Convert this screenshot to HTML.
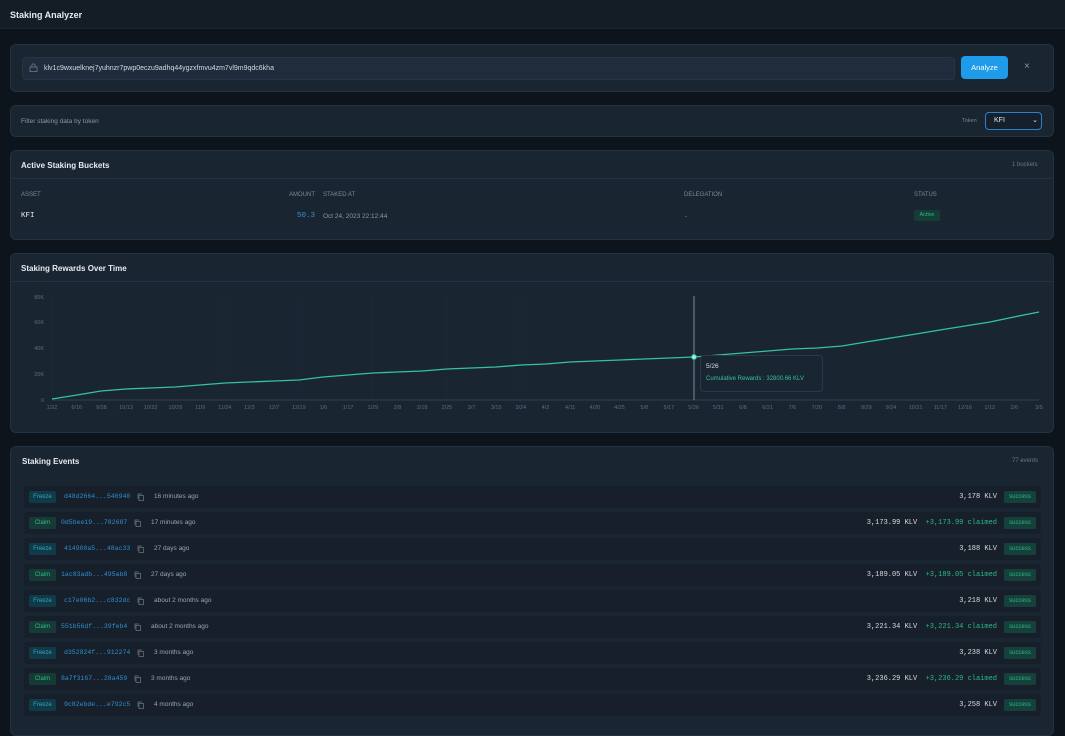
<!DOCTYPE html>
<html><head><meta charset="utf-8"><style>
*{box-sizing:border-box;margin:0;padding:0}
body{width:1065px;height:720px;overflow:hidden;background:#0e141b;font-family:"Liberation Sans",sans-serif;color:#e3e8ee;position:relative}
.a{position:absolute}
.card{position:absolute;left:10px;width:1044px;background:#1a2532;border:1px solid #233140;border-radius:6px}
.t{font-size:8px;font-weight:bold;color:#e6ebf0}
.mono{font-family:"Liberation Mono",monospace}
.row{position:absolute;left:24px;width:1017px;height:22px;background:#161f2a;border-radius:3px}
.tag{position:absolute;left:5px;top:5px;height:12px;width:27px;font-size:6px;line-height:12px;text-align:center;border-radius:2px}
.fz{background:#113a48;color:#2ea7c4}
.cl{background:#163b36;color:#33b98b}
.hash{position:absolute;top:7px;font-size:6.5px;color:#2f8fd0}
.cp{position:absolute;top:7px;width:7px;height:8px}
.ago{position:absolute;top:7px;font-size:6.5px;color:#9aa5b1}
.amt{position:absolute;right:44px;top:7px;font-size:7px;color:#d8dde3;text-align:right;white-space:pre}
.ok{position:absolute;right:5px;top:5px;width:32px;height:12px;background:#15413a;color:#2cb988;font-size:6px;line-height:12px;text-align:center;border-radius:2px}
.cg{color:#2cb988}
</style></head><body>
<div class="a" style="left:0;top:0;width:1065px;height:29px;background:#141c25;border-bottom:1px solid #1b2530"></div>
<div class="a t" style="left:10px;top:10px;font-size:9px">Staking Analyzer</div>

<div class="card" style="top:44px;height:48px"></div>
<div class="a" style="left:22px;top:57px;width:933px;height:23px;background:#1e2c3b;border:1px solid #263546;border-radius:4px"></div>
<svg class="a" style="left:29px;top:63px" width="9" height="9" viewBox="0 0 9 9"><rect x="1" y="4" width="7" height="4.5" fill="none" stroke="#6e7a88" stroke-width=".8"/><path d="M2.8 4V2.6a1.7 1.7 0 0 1 3.4 0V4" fill="none" stroke="#6e7a88" stroke-width=".8"/></svg>
<div class="a" style="left:44px;top:65px;font-size:7px;color:#d5dbe2">klv1c9wxuelknej7yuhnzr7pwp0eczu9adhq44ygzxfmvu4zm7vl9m9qdc6kha</div>
<div class="a" style="left:961px;top:56px;width:47px;height:23px;background:#1e9be9;border-radius:4px;color:#fff;font-size:7.5px;line-height:23px;text-align:center">Analyze</div>
<div class="a" style="left:1024px;top:61px;font-size:10px;line-height:12px;color:#8a96a3">×</div>

<div class="card" style="top:105px;height:32px"></div>
<div class="a" style="left:21px;top:118px;font-size:6.5px;color:#8a96a3">Filter staking data by token</div>
<div class="a" style="left:962px;top:118px;font-size:5.5px;color:#7a8693">Token</div>
<div class="a" style="left:985px;top:112px;width:57px;height:18px;border:1px solid #2f7fd0;border-radius:4px;background:#15202c;font-size:7px;line-height:16px;padding-left:8px;color:#e3e8ee">KFI<span style="position:absolute;right:3px;top:0;font-size:7px">⌄</span></div>

<div class="card" style="top:150px;height:90px"></div>
<div class="a t" style="left:21px;top:161px">Active Staking Buckets</div>
<div class="a" style="left:1012px;top:162px;font-size:6px;color:#6c7885">1 buckets</div>
<div class="a" style="left:11px;top:178px;width:1042px;height:1px;background:#223040"></div>
<div class="a" style="left:21px;top:192px;font-size:6px;color:#7d8895">ASSET</div>
<div class="a" style="left:289px;top:192px;font-size:6px;color:#7d8895">AMOUNT</div>
<div class="a" style="left:323px;top:192px;font-size:6px;color:#7d8895">STAKED AT</div>
<div class="a" style="left:684px;top:192px;font-size:6px;color:#7d8895">DELEGATION</div>
<div class="a" style="left:914px;top:192px;font-size:6px;color:#7d8895">STATUS</div>
<div class="a mono" style="left:21px;top:212px;font-size:7.5px;color:#e6ebf0">KFI</div>
<div class="a mono" style="left:297px;top:212px;font-size:7.5px;color:#2f95d8">50.3</div>
<div class="a" style="left:323px;top:213px;font-size:6.5px;color:#8c97a3">Oct 24, 2023 22:12:44</div>
<div class="a" style="left:685px;top:213px;font-size:6.5px;color:#8c97a3">-</div>
<div class="a" style="left:914px;top:210px;width:26px;height:11px;background:#143d36;color:#2cb988;font-size:5.5px;line-height:11px;text-align:center;border-radius:2px">Active</div>

<div class="card" style="top:253px;height:180px"></div>
<div class="a t" style="left:21px;top:264px">Staking Rewards Over Time</div>
<div class="a" style="left:11px;top:281px;width:1042px;height:1px;background:#223040"></div>
<svg class="a" style="left:0;top:0" width="1065" height="440" font-family="Liberation Sans" font-size="5.5" fill="#5f6b78">
<g stroke="#243242" stroke-width=".6" stroke-dasharray="2 2">
<line x1="52" y1="297" x2="52" y2="400"/><line x1="299" y1="297" x2="299" y2="400"/><line x1="372" y1="297" x2="372" y2="400"/><line x1="520" y1="297" x2="520" y2="400"/><line x1="224" y1="297" x2="224" y2="400"/><line x1="446" y1="297" x2="446" y2="400"/></g>
<line x1="52" y1="400" x2="1039" y2="400" stroke="#3a4756" stroke-width=".8"/>
<text x="44" y="299" text-anchor="end">80K</text><text x="44" y="324" text-anchor="end">60K</text><text x="44" y="350" text-anchor="end">40K</text><text x="44" y="376" text-anchor="end">20K</text><text x="44" y="402" text-anchor="end">0</text>
<g text-anchor="middle">
<text x="52.0" y="409">12/2</text><text x="76.7" y="409">6/16</text><text x="101.4" y="409">9/28</text><text x="126.0" y="409">10/13</text><text x="150.7" y="409">10/22</text><text x="175.4" y="409">10/29</text><text x="200.1" y="409">11/9</text><text x="224.7" y="409">11/24</text><text x="249.4" y="409">12/3</text><text x="274.1" y="409">12/7</text><text x="298.8" y="409">12/19</text><text x="323.4" y="409">1/6</text><text x="348.1" y="409">1/17</text><text x="372.8" y="409">1/29</text><text x="397.5" y="409">2/8</text><text x="422.1" y="409">2/18</text><text x="446.8" y="409">2/25</text><text x="471.5" y="409">3/7</text><text x="496.2" y="409">3/15</text><text x="520.8" y="409">3/24</text><text x="545.5" y="409">4/2</text><text x="570.2" y="409">4/11</text><text x="594.9" y="409">4/20</text><text x="619.5" y="409">4/25</text><text x="644.2" y="409">5/8</text><text x="668.9" y="409">5/17</text><text x="693.6" y="409">5/26</text><text x="718.2" y="409">5/31</text><text x="742.9" y="409">6/8</text><text x="767.6" y="409">6/21</text><text x="792.3" y="409">7/6</text><text x="816.9" y="409">7/20</text><text x="841.6" y="409">8/8</text><text x="866.3" y="409">8/29</text><text x="891.0" y="409">9/24</text><text x="915.6" y="409">10/21</text><text x="940.3" y="409">11/17</text><text x="965.0" y="409">12/16</text><text x="989.7" y="409">1/12</text><text x="1014.3" y="409">2/6</text><text x="1039.0" y="409">3/5</text></g>
<line x1="694" y1="296" x2="694" y2="400" stroke="#7f8a96" stroke-width="1"/>
<polyline fill="none" stroke="#34c39a" stroke-width="1.3" points="52,399 77,395 101,391 126,389 150,388 175,387 200,385 225,383 249,382 274,381 299,380 323,377 348,375 373,373 397,372 422,371 447,369 471,368 496,367 521,365 546,364 570,362 595,361 620,360 644,359 669,358 694,357 718,355 743,353 768,351 792,349 817,348 842,346 866,342 891,338 916,334 940,330 965,326 990,322 1014,317 1039,312"/>
<circle cx="694" cy="357" r="2.4" fill="#9ff0d8" stroke="#34c39a" stroke-width="1"/>
</svg>
<div class="a" style="left:700px;top:355px;width:123px;height:37px;background:#1a2532;border:1px solid #2a3847;border-radius:4px"></div>
<div class="a" style="left:706px;top:363px;font-size:6.5px;color:#d8dde3">5/26</div>
<div class="a" style="left:706px;top:376px;font-size:6px;color:#34c39a">Cumulative Rewards : 32800.66 KLV</div>

<div class="card" style="top:446px;height:290px"></div>
<div class="a t" style="left:22px;top:457px">Staking Events</div>
<div class="a" style="left:1012px;top:458px;font-size:6px;color:#6c7885">77 events</div>

<div class="row" style="top:486px"><div class="tag fz">Freeze</div><div class="hash mono" style="left:40px">d48d2664...546940</div><svg class="cp" style="left:113px" viewBox="0 0 7 8"><rect x="2" y="2.5" width="4.5" height="5" fill="none" stroke="#6e7a88" stroke-width=".7"/><path d="M1 6V1h4" fill="none" stroke="#6e7a88" stroke-width=".7"/></svg><div class="ago" style="left:130px">16 minutes ago</div><div class="amt mono">3,178 KLV</div><div class="ok">success</div></div>
<div class="row" style="top:512px"><div class="tag cl">Claim</div><div class="hash mono" style="left:37px">0d5bee19...782687</div><svg class="cp" style="left:110px" viewBox="0 0 7 8"><rect x="2" y="2.5" width="4.5" height="5" fill="none" stroke="#6e7a88" stroke-width=".7"/><path d="M1 6V1h4" fill="none" stroke="#6e7a88" stroke-width=".7"/></svg><div class="ago" style="left:127px">17 minutes ago</div><div class="amt mono">3,173.99 KLV  <span class="cg">+3,173.99 claimed</span></div><div class="ok">success</div></div>
<div class="row" style="top:538px"><div class="tag fz">Freeze</div><div class="hash mono" style="left:40px">414900a5...48ac33</div><svg class="cp" style="left:113px" viewBox="0 0 7 8"><rect x="2" y="2.5" width="4.5" height="5" fill="none" stroke="#6e7a88" stroke-width=".7"/><path d="M1 6V1h4" fill="none" stroke="#6e7a88" stroke-width=".7"/></svg><div class="ago" style="left:130px">27 days ago</div><div class="amt mono">3,188 KLV</div><div class="ok">success</div></div>
<div class="row" style="top:564px"><div class="tag cl">Claim</div><div class="hash mono" style="left:37px">1ac83adb...495ab8</div><svg class="cp" style="left:110px" viewBox="0 0 7 8"><rect x="2" y="2.5" width="4.5" height="5" fill="none" stroke="#6e7a88" stroke-width=".7"/><path d="M1 6V1h4" fill="none" stroke="#6e7a88" stroke-width=".7"/></svg><div class="ago" style="left:127px">27 days ago</div><div class="amt mono">3,189.05 KLV  <span class="cg">+3,189.05 claimed</span></div><div class="ok">success</div></div>
<div class="row" style="top:590px"><div class="tag fz">Freeze</div><div class="hash mono" style="left:40px">c17e06b2...c832dc</div><svg class="cp" style="left:113px" viewBox="0 0 7 8"><rect x="2" y="2.5" width="4.5" height="5" fill="none" stroke="#6e7a88" stroke-width=".7"/><path d="M1 6V1h4" fill="none" stroke="#6e7a88" stroke-width=".7"/></svg><div class="ago" style="left:130px">about 2 months ago</div><div class="amt mono">3,218 KLV</div><div class="ok">success</div></div>
<div class="row" style="top:616px"><div class="tag cl">Claim</div><div class="hash mono" style="left:37px">551b56df...39feb4</div><svg class="cp" style="left:110px" viewBox="0 0 7 8"><rect x="2" y="2.5" width="4.5" height="5" fill="none" stroke="#6e7a88" stroke-width=".7"/><path d="M1 6V1h4" fill="none" stroke="#6e7a88" stroke-width=".7"/></svg><div class="ago" style="left:127px">about 2 months ago</div><div class="amt mono">3,221.34 KLV  <span class="cg">+3,221.34 claimed</span></div><div class="ok">success</div></div>
<div class="row" style="top:642px"><div class="tag fz">Freeze</div><div class="hash mono" style="left:40px">d352824f...912274</div><svg class="cp" style="left:113px" viewBox="0 0 7 8"><rect x="2" y="2.5" width="4.5" height="5" fill="none" stroke="#6e7a88" stroke-width=".7"/><path d="M1 6V1h4" fill="none" stroke="#6e7a88" stroke-width=".7"/></svg><div class="ago" style="left:130px">3 months ago</div><div class="amt mono">3,238 KLV</div><div class="ok">success</div></div>
<div class="row" style="top:668px"><div class="tag cl">Claim</div><div class="hash mono" style="left:37px">8a7f3167...28a459</div><svg class="cp" style="left:110px" viewBox="0 0 7 8"><rect x="2" y="2.5" width="4.5" height="5" fill="none" stroke="#6e7a88" stroke-width=".7"/><path d="M1 6V1h4" fill="none" stroke="#6e7a88" stroke-width=".7"/></svg><div class="ago" style="left:127px">3 months ago</div><div class="amt mono">3,236.29 KLV  <span class="cg">+3,236.29 claimed</span></div><div class="ok">success</div></div>
<div class="row" style="top:694px"><div class="tag fz">Freeze</div><div class="hash mono" style="left:40px">9c82ebde...e792c5</div><svg class="cp" style="left:113px" viewBox="0 0 7 8"><rect x="2" y="2.5" width="4.5" height="5" fill="none" stroke="#6e7a88" stroke-width=".7"/><path d="M1 6V1h4" fill="none" stroke="#6e7a88" stroke-width=".7"/></svg><div class="ago" style="left:130px">4 months ago</div><div class="amt mono">3,258 KLV</div><div class="ok">success</div></div>
</body></html>
